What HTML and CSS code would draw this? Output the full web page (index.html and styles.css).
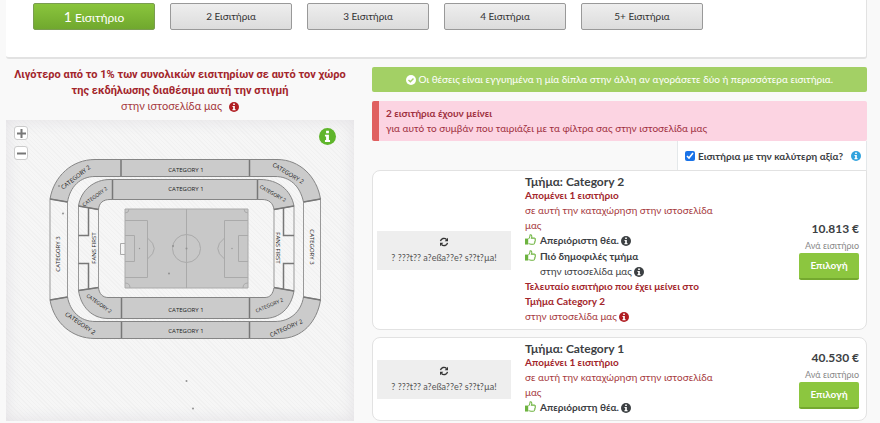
FILE: index.html
```html
<!DOCTYPE html>
<html lang="el">
<head>
<meta charset="utf-8">
<meta name="viewport" content="width=device-width, initial-scale=1">
<title>Εισιτήρια</title>
<link rel="stylesheet" href="styles.css">
</head>
<body>
<svg class="defs" aria-hidden="true">
  <symbol id="info" viewBox="0 0 12 12"><circle cx="6" cy="6" r="6" fill="currentColor"/><path d="M5 1.9h2v1.8H5zM4.2 4.7H7v3.8h.8v1.4H4.2V8.500H5V6h-.8z" fill="#fff"/></symbol>
  <symbol id="check" viewBox="0 0 12 12"><circle cx="6" cy="6" r="6" fill="currentColor"/><path d="M3 6l2.200 2.200L9 4.300" fill="none" stroke="#a3d065" stroke-width="1.700"/></symbol>
  <symbol id="thumb" viewBox="0 0 12 12"><path d="M0 5h3.500v6.500H0z" fill="currentColor"/><path d="M3.800 5.300C5.500 4.500 5.300 2.800 5.500 1c1.800-.6 2.400 1.500 1.500 3.500h3.500c1.200.3 1 1.500.4 1.900.6.6.4 1.500-.2 1.800.4.700.1 1.300-.5 1.600.2 1-.4 1.500-1.400 1.500H6.500L3.800 10.500" fill="none" stroke="currentColor" stroke-width="1.100"/></symbol>
  <symbol id="refresh" viewBox="0 0 12 12"><path d="M1.800 5A4.200 4.200 0 0 1 9 3M10.200 7A4.200 4.200 0 0 1 3 9" fill="none" stroke="currentColor" stroke-width="1.600"/><path d="M10.800 1v4H6.800zM1.200 11V7h4z" fill="currentColor"/></symbol>
</svg>

<nav class="quantity" aria-label="Εισιτήρια">
  <button class="qty qty-active" type="button"><span>1</span> Εισιτήριο</button>
  <button class="qty" type="button">2 Εισιτήρια</button>
  <button class="qty" type="button">3 Εισιτήρια</button>
  <button class="qty" type="button">4 Εισιτήρια</button>
  <button class="qty" type="button">5+ Εισιτήρια</button>
</nav>

<main class="content">
  <section class="venue">
    <p class="scarcity"><strong>Λιγότερο από το 1% των συνολικών εισιτηρίων σε αυτό τον χώρο της εκδήλωσης διαθέσιμα αυτή την στιγμή</strong><br>στην ιστοσελίδα μας <svg class="icon info-red"><use href="#info"/></svg></p>
    <div class="map">
      <svg class="stadium" viewBox="6 121 348 301">
        <g class="stand">
          <path d="M95 160.500H277C300 160.500 317 178 320.500 200L303.500 203C300 187 290 177.500 275 177.500H95C80 177.500 70 188 67.500 203L50 200C54 177 72 160.500 95 160.500z"/>
          <path d="M50 301L67.500 298C70 312 80 322.500 95 322.500H275C290 322.500 301 313 303.500 298L320.500 301C317 323 302 339.500 280 339.500H95C72 339.500 54 324 50 301z"/>
          <path d="M110 180.500H260C278 180.500 291 191 294 207L274 210.500C273 204 269 200.500 262 200.500H110C103 200.500 99 204 98.500 210.500L78.500 207C81 191 94 180.500 110 180.500z"/>
          <path d="M78.500 291.500L98.500 288.500C99 295 103 298.500 108 298.500H265C270 298.500 273 295 274 288.500L294 292C291 309 280 319.500 264 319.500H108C92 319.500 81 308 78.500 291.500z"/>
        </g>
        <path class="edge" d="M50 200V301M67.500 203V298M303.500 203V298M320.500 200V301M78.500 207V291M98.500 210V288M274 210V288M294 207V292"/>
        <path class="divider" d="M121 161V177M249.500 161V177M112.500 181V200M257.500 181V200M121.500 299V319M121.500 323V339M249.500 299V319M249.500 323V339M50 200L67.500 203M320.500 200L303.500 203M50 301L67.500 298M320.500 301L303.500 298M78.500 207L98.500 210.500M294 207L274 210.500M78.500 291.500L98.500 288.500M294 292L274 288.500M88.500 209V236.500H78.500M78.500 264.500H88.500V290M283.500 209V236.500H294M294 264.500H283.500V290"/>
        <path class="grass" d="M125 210H248V289H125z"/>
        <g class="lines">
          <path d="M125 210H248V289H125zM186.500 210V289M125 221.500H147.500V278.500H125M125 236.500H134.500V262.500H125M125 244.500H120.500V255.500H125M248 221.500H224.500V278.500H248M248 236.500H238.500V262.500H248M147.500 239Q161 249.500 147.500 260M224.500 239Q211 249.500 224.500 260M125 214Q129 214 129 210M244 210Q244 214 248 214M125 284Q130 284 130 289M243 289Q243 284 248 284"/>
          <circle cx="186.500" cy="249.500" r="14"/>
        </g>
        <g class="dots"><circle cx="186.500" cy="249.500" r="1"/><circle cx="139.500" cy="249.500" r=".7"/><circle cx="232" cy="249.500" r=".7"/><circle cx="173" cy="247" r="1"/><circle cx="169" cy="274.500" r="1"/><circle cx="63" cy="214.500" r="1"/><circle cx="59" cy="187" r="1"/><circle cx="186.500" cy="382" r="1"/><circle cx="193" cy="409.500" r="1"/></g>
        <g class="labels">
          <text x="186" y="173">CATEGORY 1</text><text x="186" y="192">CATEGORY 1</text>
          <text x="186" y="313">CATEGORY 1</text><text x="186" y="334">CATEGORY 1</text>
          <text transform="translate(77 180) rotate(-38)">CATEGORY 2</text>
          <text transform="translate(287 176) rotate(31)">CATEGORY 2</text>
          <text transform="translate(79 326) rotate(34)">CATEGORY 2</text>
          <text transform="translate(287 331) rotate(-24)">CATEGORY 2</text>
          <text transform="translate(60 255) rotate(-90)">CATEGORY 3</text>
          <text transform="translate(310 248) rotate(90)">CATEGORY 3</text>
          <text transform="translate(96 249) rotate(-90)">FANS FIRST</text>
          <text transform="translate(276 249) rotate(90)">FANS FIRST</text>
          <g class="labels-small">
            <text transform="translate(96 199) rotate(-36)">CATEGORY 2</text>
            <text transform="translate(272 196) rotate(29)">CATEGORY 2</text>
            <text transform="translate(98 306) rotate(35)">CATEGORY 2</text>
            <text transform="translate(270 308) rotate(-23)">CATEGORY 2</text>
          </g>
        </g>
      </svg>
      <div class="zoom">
        <button type="button" aria-label="Μεγέθυνση"><svg viewBox="0 0 9 9"><path d="M4.500 0V9M0 4.500H9"/></svg></button>
        <button type="button" aria-label="Σμίκρυνση"><svg viewBox="0 0 9 9"><path d="M0 4.500H9"/></svg></button>
      </div>
      <svg class="map-info"><use href="#info"/></svg>
    </div>
  </section>

  <section class="offers">
    <p class="guarantee"><svg class="icon"><use href="#check"/></svg> Οι θέσεις είναι εγγυημένα η μία δίπλα στην άλλη αν αγοράσετε δύο ή περισσότερα εισιτήρια.</p>
    <p class="remaining"><strong>2 εισιτήρια έχουν μείνει</strong><br>για αυτό το συμβάν που ταιριάζει με τα φίλτρα σας στην ιστοσελίδα μας</p>
    <div class="best"><input type="checkbox" id="best" checked><label for="best">Εισιτήρια με την καλύτερη αξία?</label><svg class="icon info-blue"><use href="#info"/></svg></div>

    <article class="ticket ticket-first">
      <div class="preview"><svg class="icon"><use href="#refresh"/></svg><span>? ???t?? a?eßa??e? s??t?µa!</span></div>
      <div class="details">
        <h2>Τμήμα: Category 2</h2>
        <p class="red"><strong>Απομένει 1 εισιτήριο</strong><br>σε αυτή την καταχώρηση στην ιστοσελίδα μας</p>
        <p class="perk"><svg class="icon thumb"><use href="#thumb"/></svg><span><strong>Απεριόριστη θέα.</strong> <svg class="icon"><use href="#info"/></svg></span></p>
        <p class="perk"><svg class="icon thumb"><use href="#thumb"/></svg><span><strong>Πιό δημοφιλές τμήμα</strong><br>στην ιστοσελίδα μας <svg class="icon"><use href="#info"/></svg></span></p>
        <p class="red"><strong>Τελευταίο εισιτήριο που έχει μείνει στο Τμήμα Category 2</strong><br>στην ιστοσελίδα μας <svg class="icon info-red"><use href="#info"/></svg></p>
      </div>
      <div class="price"><strong>10.813 €</strong><span>Ανά εισιτήριο</span><button type="button">Επιλογή</button></div>
    </article>

    <article class="ticket">
      <div class="preview"><svg class="icon"><use href="#refresh"/></svg><span>? ???t?? a?eßa??e? s??t?µa!</span></div>
      <div class="details">
        <h2>Τμήμα: Category 1</h2>
        <p class="red"><strong>Απομένει 1 εισιτήριο</strong><br>σε αυτή την καταχώρηση στην ιστοσελίδα μας</p>
        <p class="perk"><svg class="icon thumb"><use href="#thumb"/></svg><span><strong>Απεριόριστη θέα.</strong> <svg class="icon"><use href="#info"/></svg></span></p>
      </div>
      <div class="price"><strong>40.530 €</strong><span>Ανά εισιτήριο</span><button type="button">Επιλογή</button></div>
    </article>
  </section>
</main>
</body>
</html>
```
FILE: styles.css
```css
* { box-sizing: border-box; }
body {
  margin: 0;
  padding: 0 13px 0 6px;
  background: #f9f9f9;
  color: #3c4043;
  font: 10px/15px Lato, "Noto Sans", sans-serif;
}
p, h2 { margin: 0; }
button { font: inherit; cursor: pointer; }
strong { font-weight: 700; }
.defs { position: absolute; width: 0; height: 0; }
.icon { width: 10px; height: 10px; vertical-align: -2px; }
.red, .scarcity { color: #a63a40; }
.red strong, .scarcity strong { color: #a3262c; }
.info-red { color: #b01e23; }

.quantity {
  display: flex;
  gap: 15px;
  padding: 3px 27px 27px;
  background: #fff;
  border: solid #e2e2e2;
  border-width: 0 1px 2px 0;
  border-radius: 0 0 3px 3px;
}
.qty {
  flex: 0 1 122px;
  height: 27px;
  padding: 0;
  border: 1px solid #999;
  border-radius: 2px;
  background: linear-gradient(#eee, #dcdcdc);
  color: #333;
}
.qty-active {
  border-color: #7a9d50;
  background: linear-gradient(#8ac53c, #70a82e);
  color: #fff;
  font-size: 12px;
}
.qty-active span { font-size: 14px; }

.content {
  display: grid;
  grid-template-columns: 348fr 495fr;
  gap: 18px;
  align-items: start;
}
.scarcity {
  padding: 7px 0;
  font-size: 11px;
  text-align: center;
}
.scarcity strong { font-family: Roboto, "Noto Sans", sans-serif; }
.scarcity .icon { margin-left: 4px; }
.map {
  position: relative;
  background: repeating-linear-gradient(45deg, #f6f6f6 0 2px, #f1f1f1 2px 3px);
  box-shadow: inset 0 0 16px #e2e0e4;
}
.stadium { display: block; width: 100%; }
.stand { fill: #cbcbcb; stroke: #858585; }
.edge, .divider, .lines { fill: none; stroke: #999; }
.divider { stroke: #777; stroke-width: 1.500; }
.grass { fill: #c8c8c8; }
.lines { stroke: #aaa; stroke-width: 1; }
.dots { fill: #929292; }
.labels { fill: #222; font: 6px "Open Sans", sans-serif; text-anchor: middle; }
.labels-small { font-size: 5px; }
.zoom {
  position: absolute;
  top: 6px;
  left: 8px;
  display: grid;
  gap: 6px;
}
.zoom button {
  display: grid;
  place-items: center;
  width: 14px;
  height: 14px;
  padding: 0;
  border: 1px solid #ccc;
  border-radius: 3px;
  background: #fff;
}
.zoom svg { width: 9px; height: 9px; stroke: #777; stroke-width: 2; }
.map-info {
  position: absolute;
  top: 8px;
  right: 18px;
  width: 17px;
  height: 17px;
  color: #5fb52b;
}

.guarantee {
  margin: 8px 0 9px;
  padding: 5px;
  border-radius: 2px;
  background: #a3d065;
  color: #fff;
  text-align: center;
}
.remaining {
  padding: 5px 9px 5px 7px;
  border-left: 7px solid #e06060;
  border-radius: 2px;
  background: #fcd4e2;
  color: #9f3040;
}
.best {
  display: flex;
  align-items: center;
  gap: 3px;
  width: fit-content;
  height: 30px;
  margin-left: auto;
  padding: 0 5px 0 7px;
  border: solid #e4e8ea;
  border-width: 0 1px 0 1px;
  background: #fff;
}
.best label { font-weight: 700; }
.best input { width: 10px; height: 10px; margin: 0; accent-color: #1a73e8; }
.info-blue { margin-left: 5px; color: #31a3dd; }

.ticket {
  display: grid;
  grid-template-columns: 134px 188px 1fr;
  column-gap: 14px;
  align-items: center;
  margin-bottom: 7px;
  padding: 5px 7px 5px 4px;
  border: 1px solid #e2e2e2;
  border-radius: 8px;
  background: #fff;
}
.ticket-first { margin-top: -1px; border-top-right-radius: 0; }
.preview {
  display: grid;
  justify-items: center;
  gap: 3px;
  padding: 6px 0 5px;
  background: #eee;
  color: #555;
  font-size: 9px;
}
.preview .icon { color: #333; }
h2 { font: 700 12px/12px Lato, "Noto Sans", sans-serif; }
.perk { display: flex; gap: 4px; }
.perk + .perk { margin-top: 1px; }
.thumb { flex: none; width: 11px; height: 11px; margin-top: 1px; color: #6db33f; }
.price {
  display: grid;
  justify-items: end;
}
.price strong { font-size: 12px; line-height: 18px; }
.price span { color: #888; font-size: 9px; }
.price button {
  width: 60px;
  height: 27px;
  padding: 0;
  border: 0;
  border-bottom: 2px solid #74a92f;
  border-radius: 2px;
  background: #8cc63f;
  color: #fff;
  font-weight: 700;
}
```
